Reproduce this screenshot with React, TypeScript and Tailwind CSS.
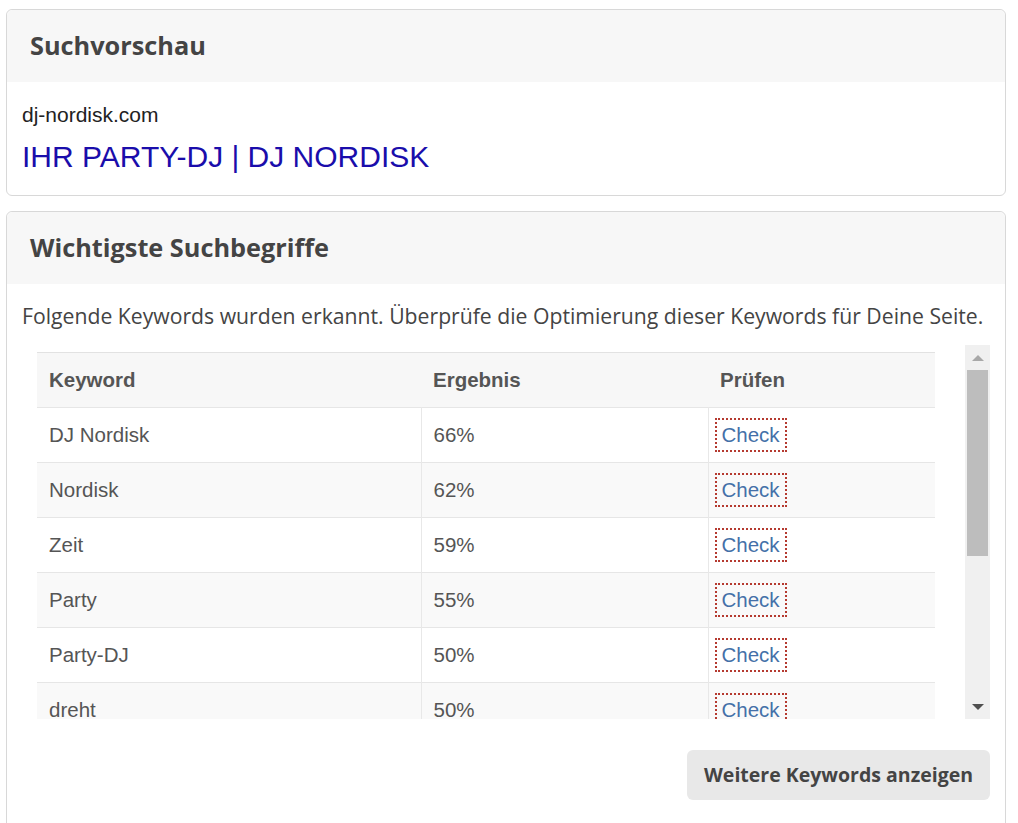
const keywords = [
  { name: 'DJ Nordisk', score: '66%' },
  { name: 'Nordisk', score: '62%' },
  { name: 'Zeit', score: '59%' },
  { name: 'Party', score: '55%' },
  { name: 'Party-DJ', score: '50%' },
  { name: 'dreht', score: '50%' },
];

function CardHeader({ title }: { title: string }) {
  return (
    <div className="h-[72px] bg-[#f7f7f7] rounded-t-[6px] flex items-center px-[23px]">
      <h2 className="font-['Open_Sans',sans-serif] font-bold text-[25.3px] text-[#444]">{title}</h2>
    </div>
  );
}

export default function App() {
  return (
    <div className="bg-white min-h-[823px] pt-[9px] px-[6px] w-[1012px]">
      {/* Suchvorschau */}
      <div className="border border-[#d8d8d8] rounded-[6px]">
        <CardHeader title="Suchvorschau" />
        <div className="px-[15px] pt-[21px] pb-[20px] font-['Liberation_Sans',Arial,sans-serif]">
          <div className="text-[21px] leading-[24px] text-[#222]">dj-nordisk.com</div>
          <div className="mt-[12px] text-[30px] leading-[36px] text-[#1a0dab]">IHR PARTY-DJ | DJ NORDISK</div>
        </div>
      </div>

      {/* Wichtigste Suchbegriffe */}
      <div className="mt-[15px] border border-[#d8d8d8] rounded-[6px] h-[640px]">
        <CardHeader title="Wichtigste Suchbegriffe" />
        <div className="px-[15px] pt-[18px]">
          <p className="font-['Open_Sans',sans-serif] text-[21.2px] leading-[28px] text-[#444] whitespace-nowrap">
            Folgende Keywords wurden erkannt. Überprüfe die Optimierung dieser Keywords für Deine Seite.
          </p>

          <div className="mt-[15px] flex h-[374px]">
            <div className="ml-[15px] w-[899px] pt-[7px] overflow-hidden">
              <table className="w-[899px] table-fixed border-collapse font-['Liberation_Sans',Arial,sans-serif] text-[20.5px] text-[#555]">
                <colgroup>
                  <col className="w-[384px]" />
                  <col className="w-[287px]" />
                  <col className="w-[228px]" />
                </colgroup>
                <thead>
                  <tr className="h-[55px] bg-[#f7f7f7] border-t border-[#e2e2e2]">
                    <th className="text-left font-bold px-[12px]">Keyword</th>
                    <th className="text-left font-bold px-[12px]">Ergebnis</th>
                    <th className="text-left font-bold px-[12px]">Prüfen</th>
                  </tr>
                </thead>
                <tbody>
                  {keywords.map((k, i) => (
                    <tr key={k.name} className={`h-[55px] border-t border-[#e6e6e6] ${i % 2 === 1 ? 'bg-[#f9f9f9]' : 'bg-white'}`}>
                      <td className="px-[12px] border-r border-[#e8e8e8]">{k.name}</td>
                      <td className="px-[12px] border-r border-[#e8e8e8]">{k.score}</td>
                      <td className="px-[6px]">
                        <span className="inline-block border-2 border-dotted border-[#b53a30] px-[5px] leading-[30px] text-[#4470a8]">
                          Check
                        </span>
                      </td>
                    </tr>
                  ))}
                </tbody>
              </table>
            </div>

            {/* scrollbar */}
            <div className="ml-[30px] w-[25px] bg-[#f0f0f0] flex flex-col items-center">
              <div className="h-[25px] flex items-center justify-center">
                <div className="w-0 h-0 border-l-[6px] border-r-[6px] border-b-[6px] border-l-transparent border-r-transparent border-b-[#a8a8a8]" />
              </div>
              <div className="w-[21px] h-[186px] bg-[#bdbdbd]" />
              <div className="flex-1" />
              <div className="h-[25px] flex items-center justify-center">
                <div className="w-0 h-0 border-l-[6px] border-r-[6px] border-t-[6px] border-l-transparent border-r-transparent border-t-[#505050]" />
              </div>
            </div>
          </div>

          <div className="mt-[31px] flex justify-end">
            <button className="h-[50px] w-[303px] bg-[#e8e8e8] rounded-[6px] font-['Open_Sans',sans-serif] font-bold text-[19.5px] text-[#444]">
              Weitere Keywords anzeigen
            </button>
          </div>
        </div>
      </div>
    </div>
  );
}
